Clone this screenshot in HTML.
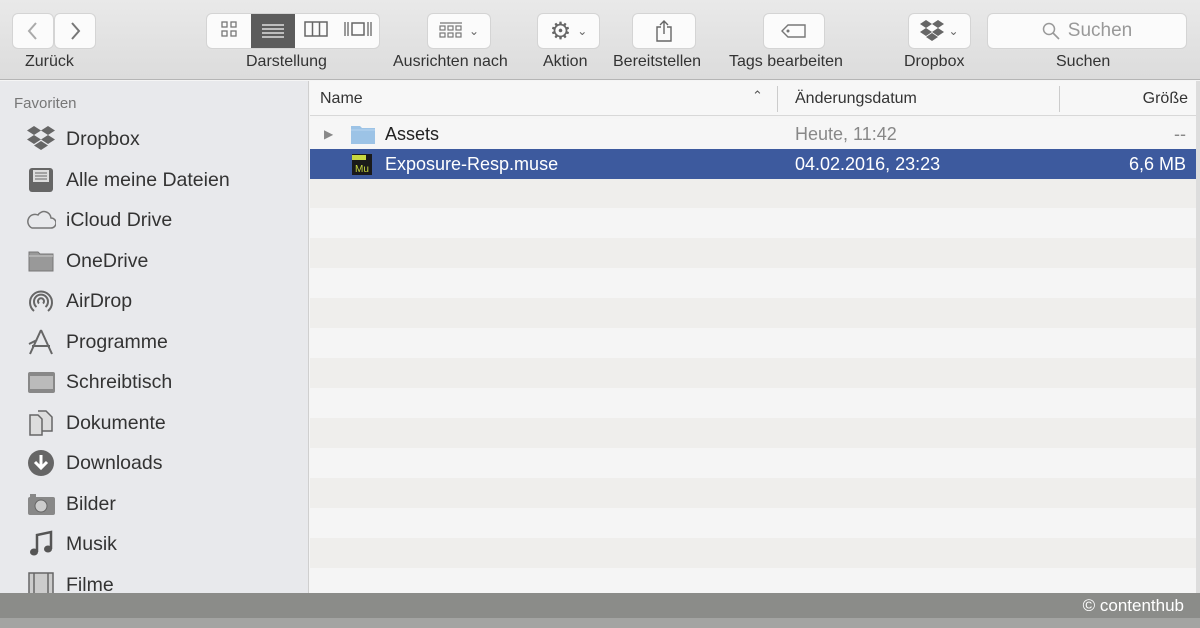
<!DOCTYPE html>
<html><head><meta charset="utf-8"><style>
*{margin:0;padding:0;box-sizing:border-box}
body{width:1200px;height:628px;overflow:hidden;font-family:"Liberation Sans",sans-serif;background:#f5f5f5;position:relative}
.tb{position:absolute;left:0;top:0;width:1200px;height:80px;background:linear-gradient(#e9e9e9,#dcdcdc);border-bottom:1px solid #b5b5b5}
.btn{position:absolute;top:14px;height:34px;background:#fbfbfb;border-radius:5px;box-shadow:0 0 0 1px #d4d4d4;display:flex;align-items:center;justify-content:center;color:#666}
.lbl{position:absolute;top:53px;font-size:16px;color:#333;white-space:nowrap}
.side{position:absolute;left:0;top:81px;width:309px;height:547px;background:#e8e9ec;border-right:1px solid #cfcfcf}
.side .h{position:absolute;left:14px;top:14px;font-size:15px;color:#777}
.it{position:absolute;left:26px;height:30px;display:flex;align-items:center;font-size:19.5px;color:#333}
.it svg{width:30px;height:28px;margin-right:10px}
.main{position:absolute;left:310px;top:81px;width:890px;height:547px;background:repeating-linear-gradient(#f5f5f5 0 97px,#f5f5f5 97px);}
.hdr{position:absolute;left:310px;top:81px;width:890px;height:35px;background:#f7f7f7;border-bottom:1px solid #d8d8d8;font-size:16px;color:#333}
.stripes{position:absolute;left:310px;top:178px;width:886px;height:420px;background:repeating-linear-gradient(#efeeec 0 30px,#f5f5f5 30px 60px)}
.row{position:absolute;left:310px;width:886px;height:30px;font-size:18px;display:flex;align-items:center}
.foot{position:absolute;left:0;top:593px;width:1200px;height:25px;background:#8b8c89;color:#fff;font-size:17px;text-align:right;padding-right:16px;line-height:25px}
.foot2{position:absolute;left:0;top:618px;width:1200px;height:10px;background:#a3a4a2}
</style></head><body>
<div class="tb">
 <div class="btn" style="left:13px;width:40px"><svg width="14" height="20"><path d="M10 2L3 10l7 8" stroke="#aaa" stroke-width="2" fill="none"/></svg></div>
 <div class="btn" style="left:55px;width:40px"><svg width="14" height="20"><path d="M4 2l7 8-7 8" stroke="#777" stroke-width="2" fill="none"/></svg></div>
 <div class="btn" style="left:207px;width:172px;justify-content:flex-start;overflow:hidden">
  <div style="width:44px;text-align:center"><svg width="16" height="16"><g fill="none" stroke="#777" stroke-width="1.3"><rect x="1" y="1" width="5" height="5"/><rect x="10" y="1" width="5" height="5"/><rect x="1" y="10" width="5" height="5"/><rect x="10" y="10" width="5" height="5"/></g></svg></div>
  <div style="width:44px;height:34px;background:#5c5c5c;display:flex;align-items:center;justify-content:center"><svg width="22" height="14"><path d="M0 1h22M0 5h22M0 9h22M0 13h22" stroke="#ddd" stroke-width="1.6"/></svg></div>
  <div style="width:42px;text-align:center"><svg width="24" height="16"><rect x="1" y="1" width="22" height="14" fill="none" stroke="#666" stroke-width="1.5"/><path d="M8.5 1v14M15.5 1v14" stroke="#666" stroke-width="1.5"/></svg></div>
  <div style="width:42px;text-align:center"><svg width="30" height="16"><path d="M2 1v14M5 1v14M25 1v14M28 1v14" stroke="#666" stroke-width="1.3"/><rect x="9" y="2" width="12" height="12" fill="none" stroke="#666" stroke-width="1.5"/></svg></div>
 </div>
 <div class="btn" style="left:428px;width:62px"><svg width="24" height="18"><g fill="none" stroke="#777" stroke-width="1.2"><path d="M1 1h22"/><rect x="1" y="4" width="5" height="4"/><rect x="9" y="4" width="5" height="4"/><rect x="17" y="4" width="5" height="4"/><rect x="1" y="11" width="5" height="4"/><rect x="9" y="11" width="5" height="4"/><rect x="17" y="11" width="5" height="4"/></g></svg><span style="font-size:12px;margin-left:6px">⌄</span></div>
 <div class="btn" style="left:538px;width:61px"><span style="font-size:24px;color:#666">⚙</span><span style="font-size:12px;margin-left:6px">⌄</span></div>
 <div class="btn" style="left:633px;width:62px"><svg width="18" height="24"><path d="M6 8H2v14h14V8h-4M9 15V2M5 6l4-4 4 4" stroke="#666" stroke-width="1.4" fill="none"/></svg></div>
 <div class="btn" style="left:764px;width:60px"><svg width="28" height="16"><path d="M8 2h17v12H8L2 8z" stroke="#777" stroke-width="1.4" fill="none"/><circle cx="8" cy="8" r="1.5" fill="#777"/></svg></div>
 <div class="btn" style="left:909px;width:61px"><svg width="24" height="22" viewBox="0 0 24 22"><g fill="#666"><path d="M6 0l6 4-6 4-6-4zM18 0l6 4-6 4-6-4zM6 8l6 4-6 4-6-4zM18 8l6 4-6 4-6-4zM12 13l6 4-6 4-6-4z"/></g></svg><span style="font-size:12px;margin-left:4px">⌄</span></div>
 <div class="btn" style="left:988px;width:198px;color:#999;font-size:19px"><svg width="18" height="18" style="margin-right:8px"><circle cx="7" cy="7" r="5.5" stroke="#999" stroke-width="1.5" fill="none"/><path d="M11 11l6 6" stroke="#999" stroke-width="1.6"/></svg>Suchen</div>
 <div class="lbl" style="left:25px">Zurück</div>
 <div class="lbl" style="left:246px">Darstellung</div>
 <div class="lbl" style="left:393px">Ausrichten nach</div>
 <div class="lbl" style="left:543px">Aktion</div>
 <div class="lbl" style="left:613px">Bereitstellen</div>
 <div class="lbl" style="left:729px">Tags bearbeiten</div>
 <div class="lbl" style="left:904px">Dropbox</div>
 <div class="lbl" style="left:1056px">Suchen</div>
</div>
<div class="side">
 <div class="h">Favoriten</div>
 <div class="it" style="top:43px"><svg viewBox="0 0 30 28"><g fill="#666"><path d="M8 1l7 4.5-7 4.5-7-4.5zM22 1l7 4.5-7 4.5-7-4.5zM8 10l7 4.5-7 4.5-7-4.5zM22 10l7 4.5-7 4.5-7-4.5zM15 16l7 4.5-7 4.5-7-4.5z"/></g></svg>Dropbox</div>
 <div class="it" style="top:84px"><svg viewBox="0 0 30 28"><rect x="3" y="2" width="24" height="24" rx="3" fill="#666"/><rect x="7" y="4" width="16" height="12" fill="#ddd"/><path d="M9 7h12M9 10h12M9 13h12" stroke="#666"/></svg>Alle meine Dateien</div>
 <div class="it" style="top:124px"><svg viewBox="0 0 30 28"><path d="M6 22h19a5 5 0 0 0 0-10 7 7 0 0 0-13-3 6 6 0 0 0-6 13z" fill="none" stroke="#777" stroke-width="1.5"/></svg>iCloud Drive</div>
 <div class="it" style="top:165px"><svg viewBox="0 0 30 28"><path d="M3 5h9l2 2h13v17H3z" fill="#999" stroke="#777"/><path d="M3 9h24" stroke="#ccc"/></svg>OneDrive</div>
 <div class="it" style="top:205px"><svg viewBox="0 0 30 28"><g fill="none" stroke="#666" stroke-width="2"><path d="M8 24a11 11 0 1 1 14 0"/><path d="M10.5 20a7 7 0 1 1 9 0"/><path d="M13 16.5a3 3 0 1 1 4 0"/></g></svg>AirDrop</div>
 <div class="it" style="top:246px"><svg viewBox="0 0 30 28"><path d="M15 2L4 26M15 2l11 24M6 18h18M11 12l-8 4" stroke="#666" stroke-width="2" fill="none"/></svg>Programme</div>
 <div class="it" style="top:286px"><svg viewBox="0 0 30 28"><rect x="2" y="4" width="27" height="21" rx="2" fill="#888"/><rect x="4" y="8" width="23" height="13" fill="#bbb"/></svg>Schreibtisch</div>
 <div class="it" style="top:327px"><svg viewBox="0 0 30 28"><path d="M4 6h8l4 4v16H4z M12 2h8l6 6v14h-10" fill="#ddd" stroke="#666" stroke-width="1.5"/></svg>Dokumente</div>
 <div class="it" style="top:367px"><svg viewBox="0 0 30 28"><circle cx="15" cy="14" r="13" fill="#666"/><path d="M15 6v12M9 13l6 6 6-6" stroke="#fff" stroke-width="3" fill="none"/></svg>Downloads</div>
 <div class="it" style="top:408px"><svg viewBox="0 0 30 28"><rect x="2" y="7" width="27" height="18" rx="2" fill="#888"/><circle cx="15" cy="16" r="6" fill="#ccc" stroke="#666"/><rect x="4" y="4" width="6" height="3" fill="#888"/></svg>Bilder</div>
 <div class="it" style="top:448px"><svg viewBox="0 0 30 28"><path d="M11 22V5l14-3v17" stroke="#555" stroke-width="2.5" fill="none"/><ellipse cx="8" cy="22" rx="4" ry="3.5" fill="#555"/><ellipse cx="22" cy="19" rx="4" ry="3.5" fill="#555"/></svg>Musik</div>
 <div class="it" style="top:489px"><svg viewBox="0 0 30 28"><rect x="3" y="2" width="24" height="25" fill="#ccc" stroke="#666" stroke-width="1.5"/><path d="M8 2v25M22 2v25" stroke="#666" stroke-width="1.5"/></svg>Filme</div>
</div>
<div class="main"></div>
<div class="stripes"></div>
<div class="hdr">
 <span style="position:absolute;left:10px;top:9px">Name</span>
 <span style="position:absolute;left:442px;top:7px;font-size:13px;color:#555">⌃</span>
 <div style="position:absolute;left:467px;top:5px;width:1px;height:26px;background:#ccc"></div>
 <span style="position:absolute;left:485px;top:9px">Änderungsdatum</span>
 <div style="position:absolute;left:749px;top:5px;width:1px;height:26px;background:#ccc"></div>
 <span style="position:absolute;right:12px;top:9px">Größe</span>
</div>
<div class="row" style="top:119px;background:#f6f6f6">
 <span style="position:absolute;left:14px;font-size:12px;color:#888">▶</span>
 <svg style="position:absolute;left:40px" width="26" height="22"><path d="M1 3h9l2 2h13v16H1z" fill="#9cc3e6"/><path d="M1 7h24" stroke="#b8d6f0"/></svg>
 <span style="position:absolute;left:75px;color:#222">Assets</span>
 <span style="position:absolute;left:485px;color:#888">Heute, 11:42</span>
 <span style="position:absolute;right:10px;color:#888">--</span>
</div>
<div class="row" style="top:149px;background:#3d5a9e;color:#fff">
 <svg style="position:absolute;left:42px" width="22" height="24"><rect x="0" y="2" width="20" height="21" fill="#1a1a1a"/><rect x="0" y="3" width="14" height="5" fill="#c8d840"/><text x="3" y="20" font-size="10" fill="#c8d840" font-family="Liberation Sans">Mu</text></svg>
 <span style="position:absolute;left:75px">Exposure-Resp.muse</span>
 <span style="position:absolute;left:485px">04.02.2016, 23:23</span>
 <span style="position:absolute;right:10px">6,6 MB</span>
</div>
<div style="position:absolute;left:1196px;top:81px;width:4px;height:512px;background:#ddd"></div>
<div class="foot">© contenthub</div>
<div class="foot2"></div>
</body></html>
